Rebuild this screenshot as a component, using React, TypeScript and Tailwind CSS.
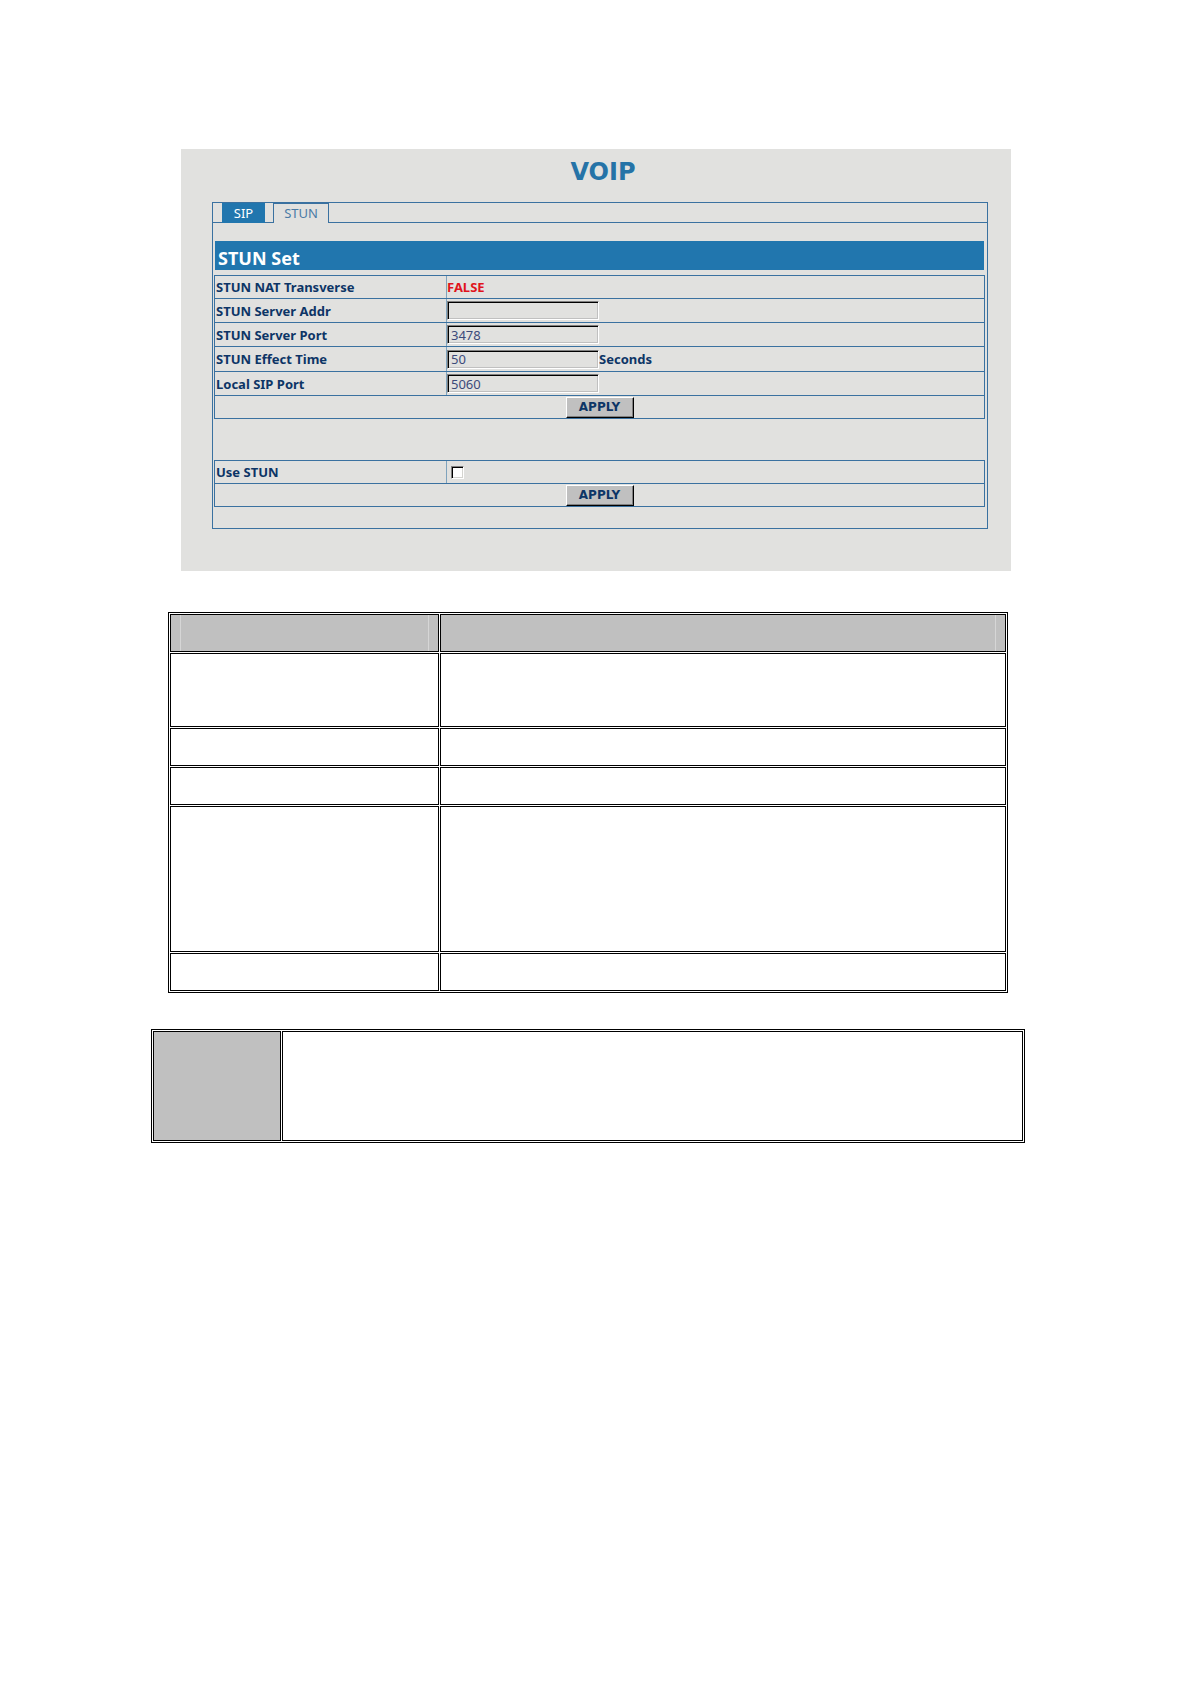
import React, { useState } from "react";

type Field = { id: string; label: string; value: string; unit?: string; rowClass: string };

const fields: Field[] = [
  { id: "stun-addr", label: "STUN Server Addr", value: "", rowClass: "h-6" },
  { id: "stun-port", label: "STUN Server Port", value: "3478", rowClass: "h-6" },
  { id: "stun-time", label: "STUN Effect Time", value: "50", unit: "Seconds", rowClass: "h-[25px]" },
  { id: "sip-port", label: "Local SIP Port", value: "5060", rowClass: "h-6" },
];

const docRows = ["h-[74px]", "h-[38px]", "h-[38px]", "h-[146px]", "h-[38px]"];

const ApplyButton = () => (
  <button
    type="submit"
    className="h-[21px] w-[68px] border border-t-white border-l-white border-r-black border-b-black bg-[#c0c0c0] font-['DejaVu_Sans'] text-xs leading-4 font-bold shadow-[inset_-1px_-1px_0_#808080]"
  >
    APPLY
  </button>
);

const Row = ({ label, id, className, children }: { label: string; id?: string; className: string; children: React.ReactNode }) => (
  <div className={`flex border-b border-[#3a71a0] ${className}`}>
    <div className="flex w-[232px] items-center border-r border-[#7fa3bd] pl-px">
      {id ? <label htmlFor={id}>{label}</label> : <span>{label}</span>}
    </div>
    <div className="flex flex-1 items-center">{children}</div>
  </div>
);

const StunPanel = () => {
  const [values, setValues] = useState<Record<string, string>>(
    Object.fromEntries(fields.map((f) => [f.id, f.value]))
  );
  const [useStun, setUseStun] = useState(false);

  return (
    <section className="mr-[14px] ml-[30px] bg-[#e1e1df] px-[31px] pt-[7px] pb-[42px] text-[13px] leading-4 font-bold text-[#0d3566]">
      <h1 className="mr-[-14px] mb-[14px] text-center font-['DejaVu_Sans'] text-2xl leading-8 font-bold text-[#2573a7]">VOIP</h1>

      <div className="-mr-2 border border-[#3a71a0] pb-[21px]">
        {/* Tabs */}
        <nav className="flex h-5 items-stretch font-normal">
          <span className="w-[9px] border-b border-[#3a71a0]" />
          <a href="#sip" className="flex w-[43px] items-center justify-center bg-[#2176ae] text-white">SIP</a>
          <span className="w-2 border-b border-[#3a71a0]" />
          <a href="#stun" className="flex w-14 items-center justify-center border-x border-t border-[#3a71a0] pb-px text-[#4a7ba6]">STUN</a>
          <span className="flex-1 border-b border-[#3a71a0]" />
        </nav>

        <h2 className="mt-[18px] mr-[3px] mb-[5px] ml-0.5 bg-[#2176ae] pt-[5px] pl-[3px] text-lg leading-6 font-bold text-white">STUN Set</h2>

        <form onSubmit={(e) => e.preventDefault()} className="mr-0.5 ml-px border border-[#3a71a0]">
          <Row label="STUN NAT Transverse" className="h-[23px]">
            <span className="text-[#e0141c]">FALSE</span>
          </Row>
          {fields.map((f) => (
            <Row key={f.id} id={f.id} label={f.label} className={f.rowClass}>
              <input
                id={f.id}
                type="text"
                value={values[f.id]}
                onChange={(e) => setValues({ ...values, [f.id]: e.target.value })}
                className="h-[19px] w-[152px] border border-t-[#808080] border-r-white border-b-white border-l-[#808080] bg-[#e1e1df] pl-[3px] font-normal text-[#3b4a7a] shadow-[inset_1px_1px_0_#000,inset_-1px_-1px_0_#c0c0c0] outline-none"
              />
              {f.unit && <span>{f.unit}</span>}
            </Row>
          ))}
          <div className="flex h-[22px] items-center justify-center">
            <ApplyButton />
          </div>
        </form>

        <form onSubmit={(e) => e.preventDefault()} className="mt-[41px] mr-0.5 ml-px border border-[#3a71a0]">
          <Row id="use-stun" label="Use STUN" className="h-[23px]">
            <input
              id="use-stun"
              type="checkbox"
              checked={useStun}
              onChange={(e) => setUseStun(e.target.checked)}
              className="ml-1 size-[13px] appearance-none border border-t-[#808080] border-r-white border-b-white border-l-[#808080] bg-white shadow-[inset_1px_1px_0_#000,inset_-1px_-1px_0_#d4d4d0] checked:bg-[#0d3566]"
            />
          </Row>
          <div className="flex h-[22px] items-center justify-center">
            <ApplyButton />
          </div>
        </form>
      </div>
    </section>
  );
};

const App = () => {
  return (
    <main className="min-h-screen bg-white pt-[149px] pr-[165px] pl-[151px] font-['Noto_Sans',sans-serif]">
      <StunPanel />

      {/* Field descriptions */}
      <div className="mx-[17px] mt-[41px]">
        <table className="w-full table-fixed border-separate border-spacing-px border border-black">
          <colgroup>
            <col className="w-[269px]" />
            <col />
          </colgroup>
          <thead>
            <tr className="h-[38px]">
              <th className="border border-black bg-[#c0c0c0] px-[9px] py-0">
                <div className="h-9 border-x border-[#d6d6d6]" />
              </th>
              <th className="border border-black bg-[#c0c0c0] py-0 pr-[9px] pl-0">
                <div className="h-9 border-r border-[#d6d6d6]" />
              </th>
            </tr>
          </thead>
          <tbody>
            {docRows.map((height, index) => (
              <tr key={index} className={height}>
                <td className="border border-black" />
                <td className="border border-black" />
              </tr>
            ))}
          </tbody>
        </table>
      </div>

      {/* Note */}
      <table className="mt-9 w-full table-fixed border-separate border-spacing-px border border-black">
        <colgroup>
          <col className="w-32" />
          <col />
        </colgroup>
        <tbody>
          <tr className="h-[110px]">
            <th className="border border-black bg-[#c0c0c0]" />
            <td className="border border-black" />
          </tr>
        </tbody>
      </table>
    </main>
  );
};

export default App;
